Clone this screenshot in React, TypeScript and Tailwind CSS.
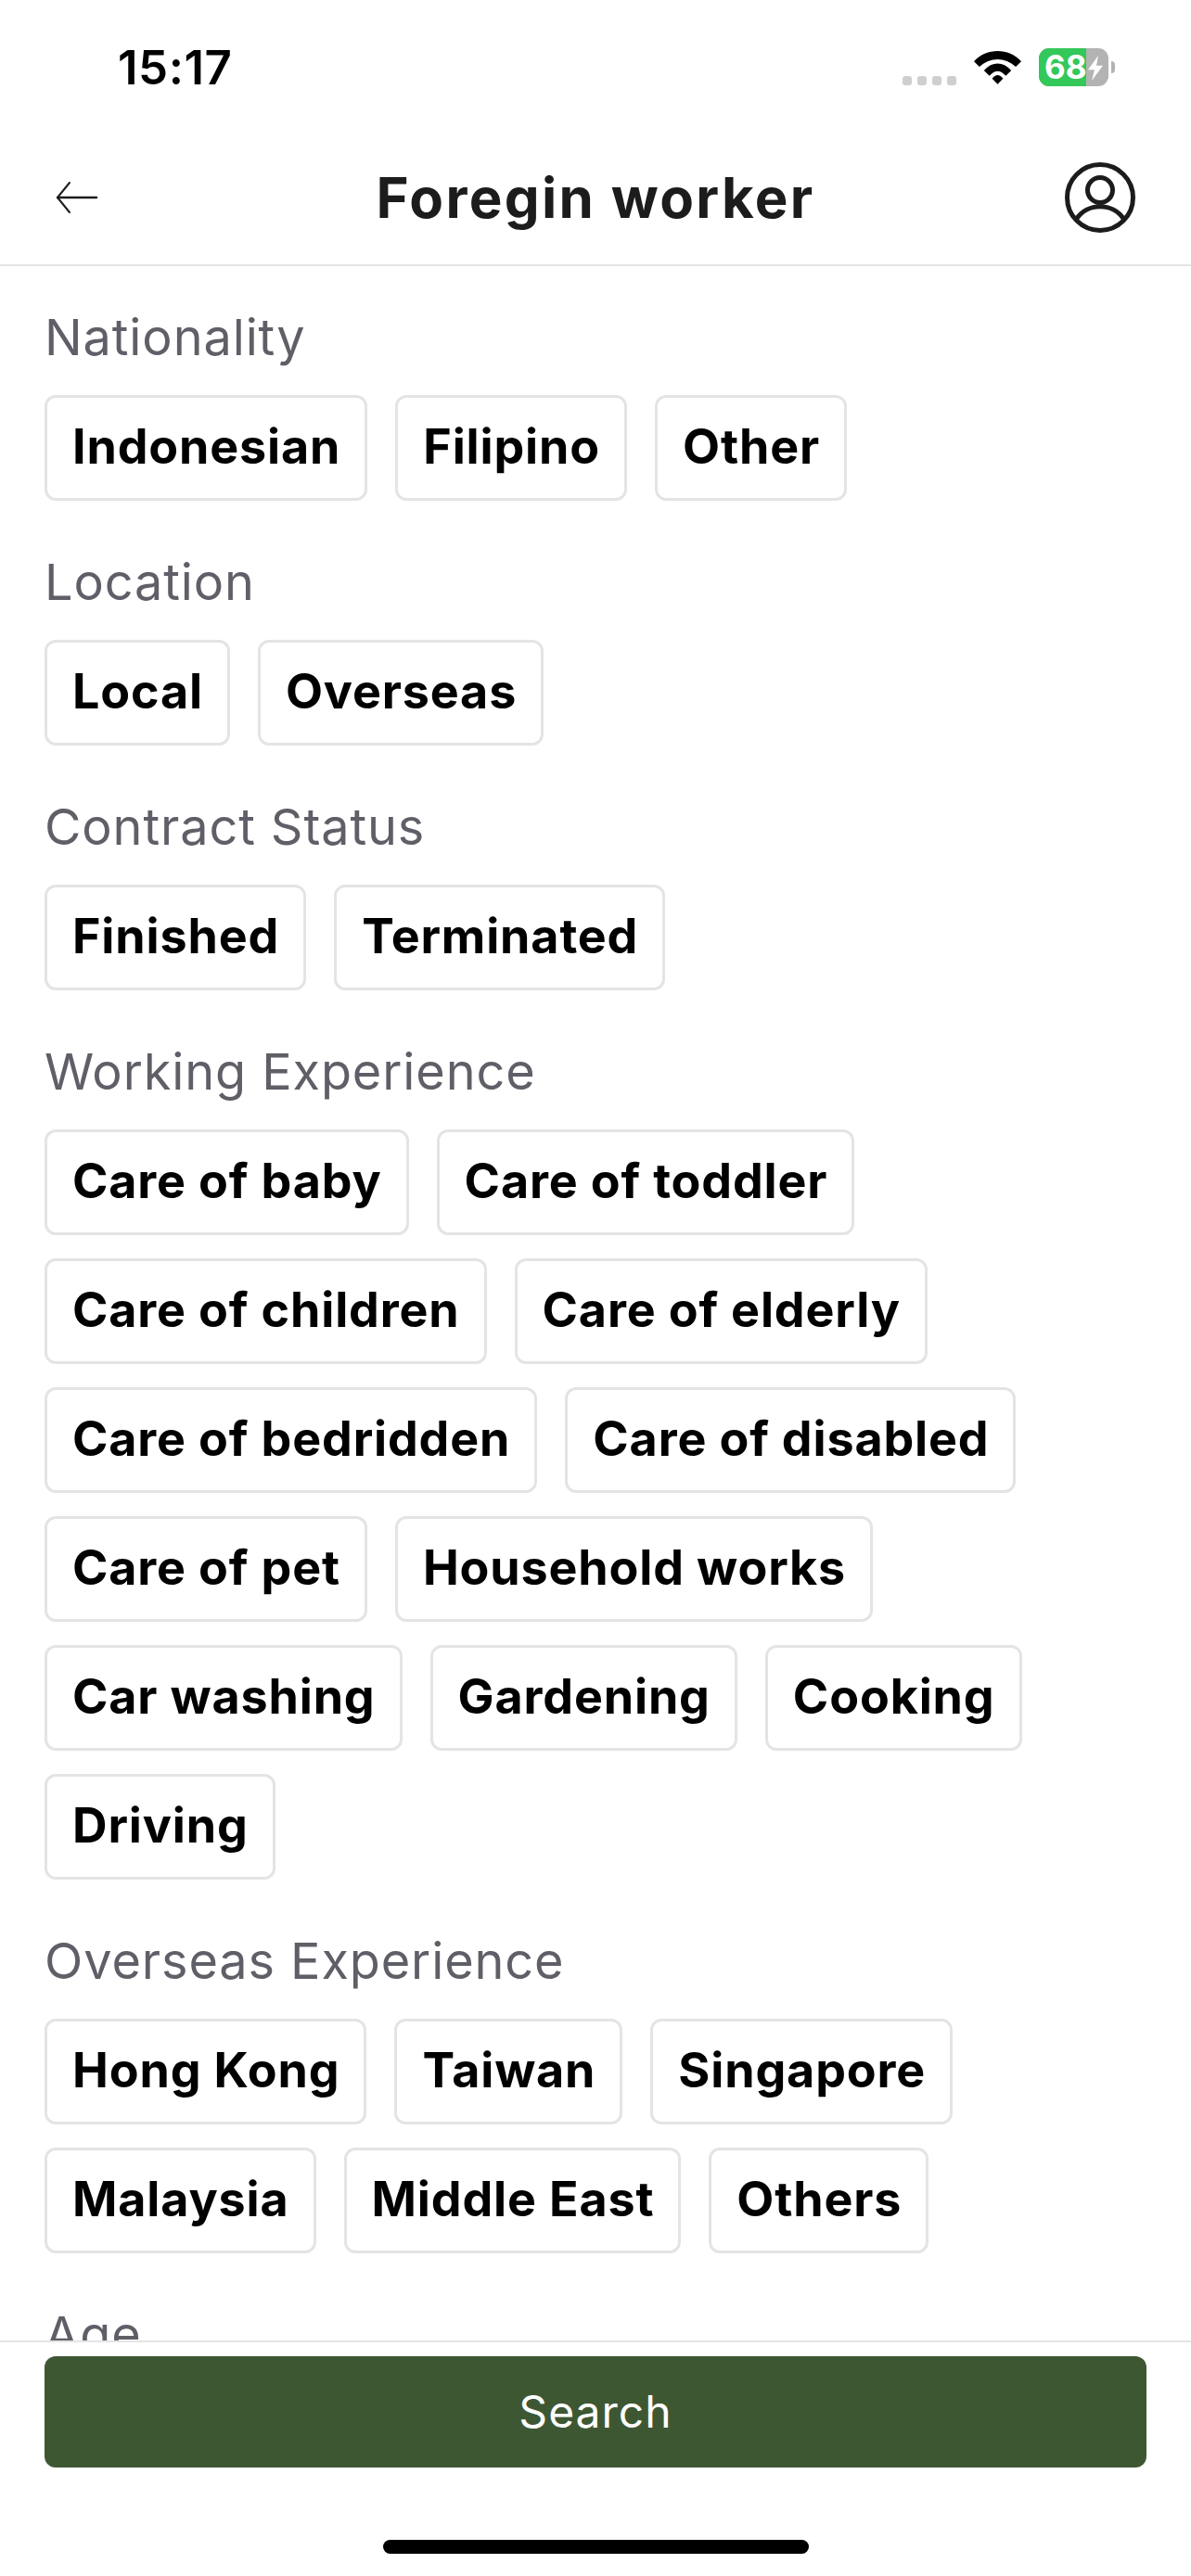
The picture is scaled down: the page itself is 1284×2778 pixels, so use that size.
const sections = [
  { title: 'Nationality', items: ['Indonesian', 'Filipino', 'Other'] },
  { title: 'Location', items: ['Local', 'Overseas'] },
  { title: 'Contract Status', items: ['Finished', 'Terminated'] },
  {
    title: 'Working Experience',
    items: [
      'Care of baby',
      'Care of toddler',
      'Care of children',
      'Care of elderly',
      'Care of bedridden',
      'Care of disabled',
      'Care of pet',
      'Household works',
      'Car washing',
      'Gardening',
      'Cooking',
      'Driving',
    ],
  },
  { title: 'Overseas Experience', items: ['Hong Kong', 'Taiwan', 'Singapore', 'Malaysia', 'Middle East', 'Others'] },
  { title: 'Age', items: ['20-30'] },
]

function StatusBar() {
  return (
    <div className="h-[144px] shrink-0 flex items-center justify-between pl-[127px] pr-[82px] pt-[1px]">
      <span className="text-[51px] font-semibold text-black leading-none tracking-[0.5px]">15:17</span>
      <div className="flex items-center">
        <div className="flex gap-[6px] mt-[28px] mr-[19px]">
          <span className="w-[10px] h-[10px] rounded-[3px] bg-[#cfcfcf]" />
          <span className="w-[10px] h-[10px] rounded-[3px] bg-[#cfcfcf]" />
          <span className="w-[10px] h-[10px] rounded-[3px] bg-[#cfcfcf]" />
          <span className="w-[10px] h-[10px] rounded-[3px] bg-[#cfcfcf]" />
        </div>
        <svg width="51" height="38" viewBox="0 0 52 38" className="mr-[19px]">
          <path d="M0 12 C14 -3 38 -3 52 12 L46 18 C34 7 18 7 6 18 Z" fill="#000" />
          <path d="M11 22 C20 12 32 12 41 22 L35 28 C29 21 23 21 17 28 Z" fill="#000" />
          <path d="M20 31 C24 26 28 26 32 31 L26 37 Z" fill="#000" />
        </svg>
        <div className="relative w-[75px] h-[41px] rounded-[11px] bg-[#b3b3b3] overflow-hidden">
          <div className="absolute inset-y-0 left-0 w-[51px] bg-[#34c759]" />
          <span className="absolute left-[6px] top-0 h-full flex items-center text-[35px] font-bold text-white leading-none">68</span>
          <svg width="18" height="27" viewBox="0 0 18 30" preserveAspectRatio="none" className="absolute left-[52px] top-[8px]">
            <path d="M12 0 L1 17 H8 L5 30 L17 12 H10 Z" fill="#fff" />
          </svg>
        </div>
        <div className="w-[4px] h-[13px] rounded-r-full bg-[#b3b3b3] ml-[3px]" />
      </div>
    </div>
  )
}

function Header() {
  return (
    <div className="h-[143px] shrink-0 flex items-center justify-between px-[60px] pb-[4px] border-b-[2px] border-[#e4e4e4]">
      <div className="w-[76px]">
        <svg width="46" height="36" viewBox="0 0 46 36" fill="none" stroke="#1c1c1c" strokeLinecap="round" strokeLinejoin="round">
          <path d="M44 18 H2" strokeWidth="2.5" />
          <path d="M15 2 L2 18 L15 34" strokeWidth="2" />
        </svg>
      </div>
      <h1 className="text-[60px] font-bold text-[#1c1c1c] leading-none tracking-[2.3px]">Foregin worker</h1>
      <svg width="76" height="76" viewBox="0 0 76 76" fill="none" stroke="#1c1c1c" strokeWidth="5">
        <circle cx="38" cy="38" r="35.5" />
        <circle cx="38" cy="30" r="13.5" />
        <path d="M12 62 C24 43 52 43 64 62" />
      </svg>
    </div>
  )
}

export default function App() {
  return (
    <div className="w-[1284px] h-[2778px] bg-white flex flex-col overflow-hidden font-['Inter',sans-serif]">
      <StatusBar />
      <Header />
      <div className="flex-1 min-h-0 overflow-hidden px-[48px] pt-[50px]">
        {sections.map((s) => (
          <section key={s.title} className="mb-[61px]">
            <h2 className="text-[54px] leading-[54px] font-normal text-[#5f5f68] tracking-[0.9px]">{s.title}</h2>
            <div className="flex flex-wrap gap-x-[30px] gap-y-[25px] mt-[35px]">
              {s.items.map((item) => (
                <div
                  key={item}
                  className="h-[114px] pl-[27px] pr-[26px] flex items-center rounded-[12px] border-[3px] border-[#e4e4e4] text-[52px] font-bold text-black tracking-[0.85px] pb-[2px]"
                >
                  {item}
                </div>
              ))}
            </div>
          </section>
        ))}
      </div>
      <div className="shrink-0 h-[254px] bg-white border-t-[2px] border-[#e4e4e4] px-[48px] pt-[15px] flex flex-col items-center">
        <div className="w-full h-[120px] rounded-[12px] bg-[#3e5733] flex items-center justify-center text-[48px] text-white tracking-[1px]">
          Search
        </div>
        <div className="w-[459px] h-[15px] rounded-full bg-black mt-[78px]" />
      </div>
    </div>
  )
}
